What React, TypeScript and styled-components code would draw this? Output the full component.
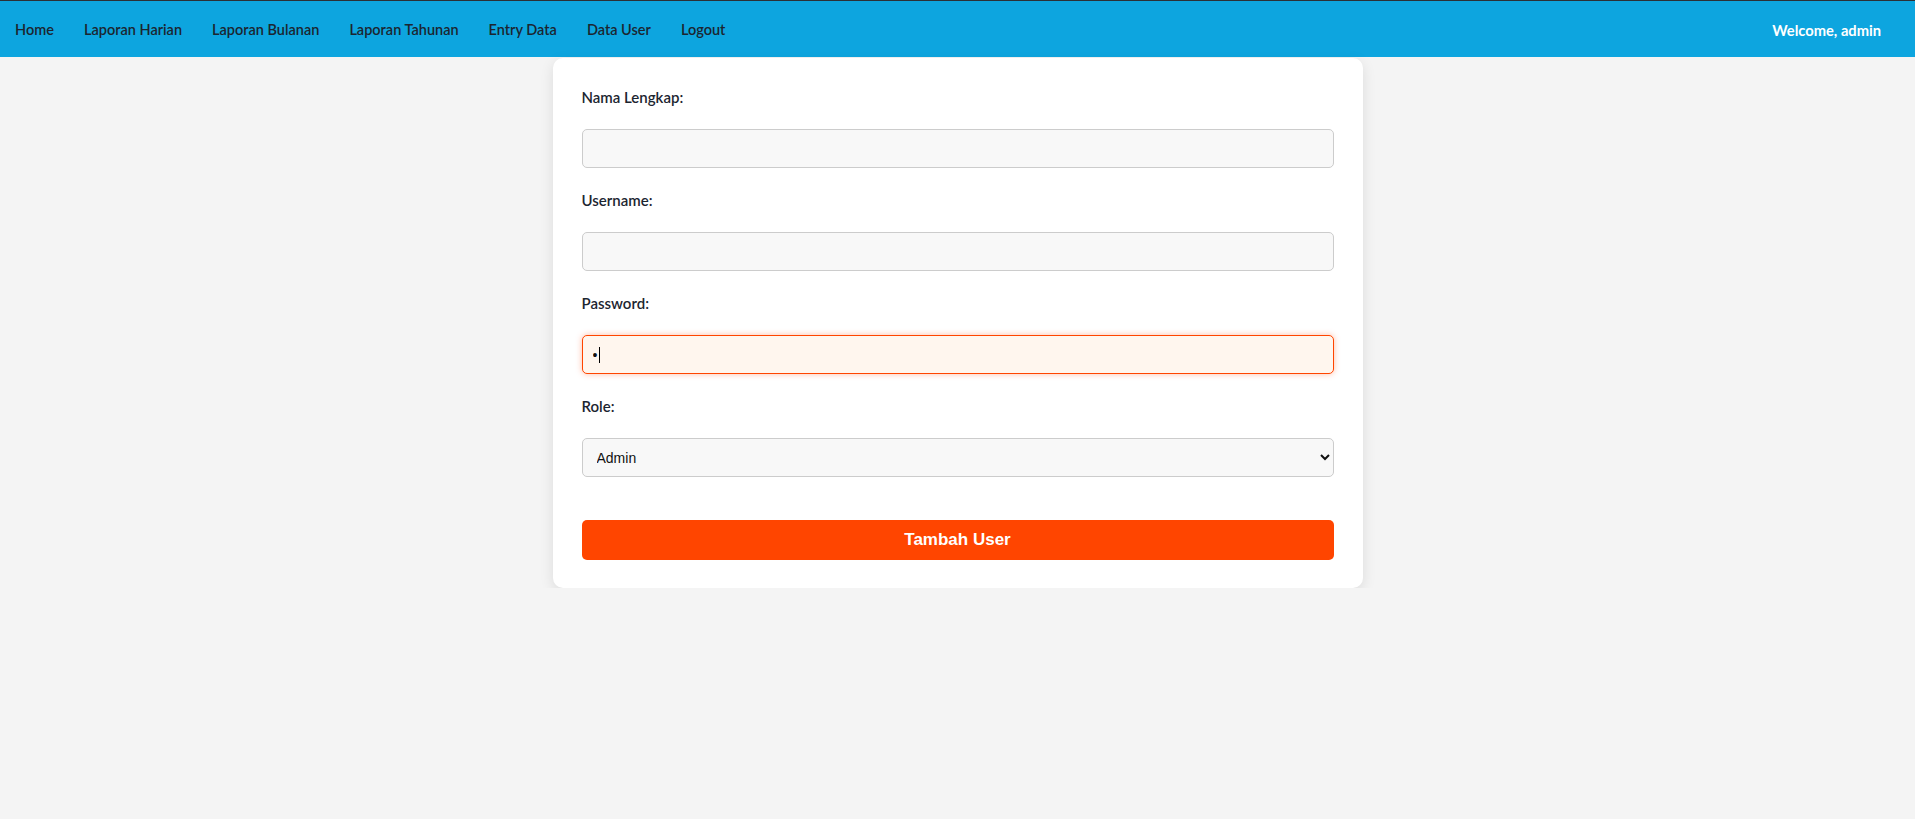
import styled, { createGlobalStyle, css } from "styled-components";

const GlobalStyle = createGlobalStyle`
  body {
    margin: 0;
    background: #f4f4f4;
    font-family: "Lato", "Open Sans", sans-serif;
    color: #1c2530;
  }
`;

const Navbar = styled.nav`
  display: flex;
  align-items: center;
  justify-content: space-between;
  height: 55px;
  padding-top: 1px;
  background: #0da5df;
  border-top: 1px solid #2b3036;
`;

const NavLinks = styled.ul`
  display: flex;
  margin: 0;
  padding: 0;
  list-style: none;
`;

const NavLink = styled.a`
  display: block;
  padding: 0 15px;
  color: #1c2530;
  font-size: 14.5px;
  font-weight: 600;
  text-decoration: none;
`;

const Welcome = styled.span`
  padding-right: 34px;
  color: #fff;
  font-size: 14.7px;
  font-weight: 700;
`;

const Card = styled.form`
  box-sizing: border-box;
  width: 810px;
  margin: 1px auto 0;
  padding: 30px 29px 28px;
  background: #fff;
  border-radius: 10px;
  box-shadow: 0 4px 14px rgba(0, 0, 0, 0.1);
`;

const Label = styled.label`
  display: block;
  margin-bottom: 22px;
  line-height: 19px;
  font-size: 15px;
  font-weight: 600;
  color: #1c2530;
`;

const fieldBase = css`
  box-sizing: border-box;
  display: block;
  width: 100%;
  height: 39px;
  margin: 0 0 23px;
  padding: 0 10px;
  background: #f8f8f8;
  border: 1px solid #ccc;
  border-radius: 5px;
  font-family: "Liberation Sans", Arial, sans-serif;
  font-size: 14px;
  color: #111;
  outline: none;
`;

const InputWrap = styled.div`
  position: relative;
`;

const Input = styled.input<{ $active?: boolean }>`
  ${fieldBase}
  ${(p) =>
    p.$active &&
    css`
      background: #fff6ee;
      border-color: #ff4500;
      box-shadow: 0 0 6px rgba(255, 69, 0, 0.35);
    `}
`;

const Caret = styled.span`
  position: absolute;
  left: 17px;
  top: 12px;
  width: 1px;
  height: 16px;
  background: #000;
`;

const Select = styled.select`
  ${fieldBase}
  margin-bottom: 43px;
`;

const SubmitButton = styled.button`
  display: block;
  width: 100%;
  height: 40px;
  border: none;
  border-radius: 5px;
  background: #ff4500;
  color: #fff;
  font-family: "Liberation Sans", Arial, sans-serif;
  font-size: 17px;
  font-weight: 700;
  cursor: pointer;
`;

const links = [
  "Home",
  "Laporan Harian",
  "Laporan Bulanan",
  "Laporan Tahunan",
  "Entry Data",
  "Data User",
  "Logout",
];

export default function App() {
  return (
    <>
      <GlobalStyle />
      <Navbar>
        <NavLinks>
          {links.map((l) => (
            <li key={l}>
              <NavLink href="#">{l}</NavLink>
            </li>
          ))}
        </NavLinks>
        <Welcome>Welcome, admin</Welcome>
      </Navbar>
      <Card onSubmit={(e) => e.preventDefault()}>
        <Label htmlFor="nama">Nama Lengkap:</Label>
        <Input id="nama" type="text" />
        <Label htmlFor="username">Username:</Label>
        <Input id="username" type="text" />
        <Label htmlFor="password">Password:</Label>
        <InputWrap>
          <Input id="password" type="password" defaultValue="a" $active />
          <Caret />
        </InputWrap>
        <Label htmlFor="role">Role:</Label>
        <Select id="role" defaultValue="admin">
          <option value="admin">Admin</option>
          <option value="user">User</option>
        </Select>
        <SubmitButton type="submit">Tambah User</SubmitButton>
      </Card>
    </>
  );
}
